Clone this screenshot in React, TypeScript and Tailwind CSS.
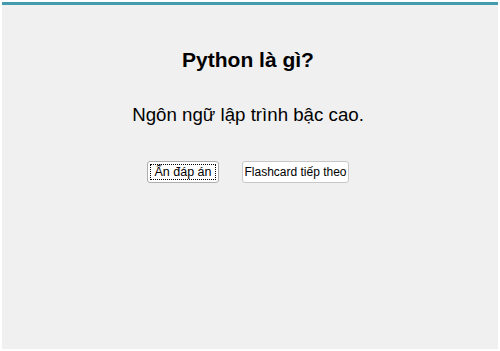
export default function App() {
  return (
    <div className="h-[351px] w-[500px] bg-white p-[2px]" style={{ fontFamily: '"Liberation Sans", Arial, sans-serif' }}>
      <div className="flex h-full flex-col items-center border-t-[3px] border-[#449bae] bg-[#f0f0f0] pr-[4px]">
        <h1 className="mt-[43px] text-[21px] font-bold leading-[24px] text-black">Python là gì?</h1>
        <p className="mt-[32px] text-[18.7px] leading-[22px] text-black">Ngôn ngữ lập trình bậc cao.</p>
        <div className="mt-[35px] flex gap-[23px]">
          <button className="h-[22px] w-[72px] rounded-[3px] border border-[#adadad] bg-white p-[2px] text-[12.5px] text-black">
            <span className="flex h-full w-full items-center justify-center border border-dotted border-black">Ẩn đáp án</span>
          </button>
          <button className="h-[22px] w-[107px] rounded-[3px] border border-[#c8c8c8] bg-white text-[12px] text-black">
            Flashcard tiếp theo
          </button>
        </div>
      </div>
    </div>
  );
}
